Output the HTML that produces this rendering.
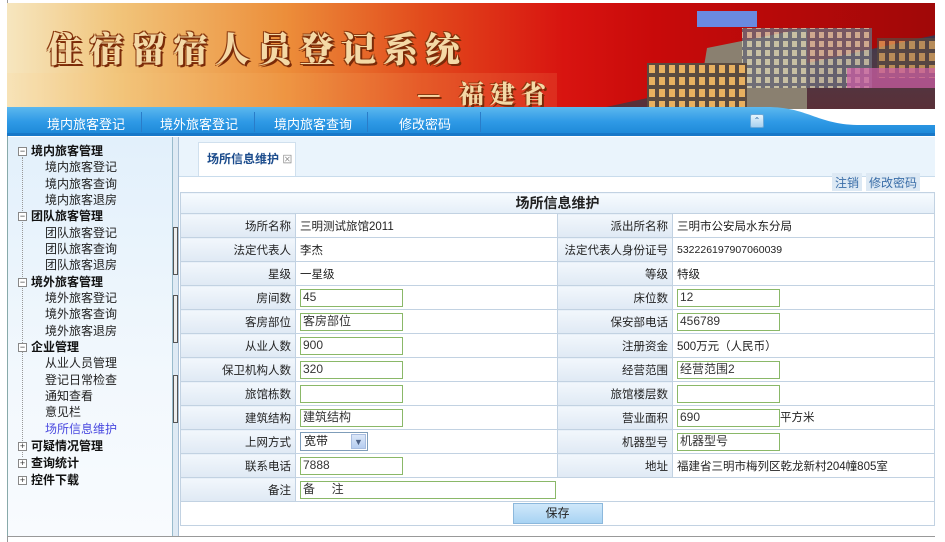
<!DOCTYPE html>
<html><head><meta charset="utf-8"><style>
*{margin:0;padding:0;box-sizing:border-box}
body{width:945px;height:542px;background:#fff;position:relative;overflow:hidden;font-family:"Liberation Sans","Noto Sans CJK SC","WenQuanYi Zen Hei",sans-serif;font-size:12px;color:#222}
.abs{position:absolute}
#banner{left:7px;top:3px;width:928px;height:106px;background:linear-gradient(90deg,#f6e6bf 0%,#f1c47a 12%,#ec8e3a 30%,#e24a1c 45%,#d81410 60%,#c80a0a 70%,#a00808 100%);overflow:hidden}
.title{left:40px;top:20px;font-family:"Noto Serif CJK SC",serif;font-weight:900;font-size:35px;letter-spacing:7px;color:#f4d9a6;text-shadow:2px 2px 0 #7a2a08,-1px -1px 0 #8a3a10,1px -1px 0 #8a3a10,-1px 1px 0 #8a3a10}
.sub{left:410px;top:72px;font-family:"Noto Serif CJK SC",serif;font-weight:900;font-size:25px;letter-spacing:6px;color:#f4d9a6;text-shadow:2px 2px 0 #7a2a08,-1px -1px 0 #8a3a10}
#nav{left:7px;top:106px;width:928px;height:30px}
.nv{top:114px;color:#fff;font-size:13px}
.sep{top:112px;width:1px;height:20px;background:#7fb8e8;border-right:1px solid #2a7cc8}
#side{left:7px;top:137px;width:166px;height:400px;background:linear-gradient(180deg,#e2f0fb,#f2f8fd 60%,#f8fbfe);border-left:1px solid #8aa;border-right:1px solid #9bc}
.t{position:absolute;font-size:12px;line-height:15px;white-space:nowrap}
.tb{font-weight:bold;color:#111}
.ts{color:#222}
.pm{position:absolute;left:10px;width:9px;height:9px;border:1px solid #888;background:#fff;font-size:9px;line-height:7px;text-align:center;color:#333}
#split{left:173px;top:137px;width:6px;height:400px;background:#dfeaf4;border-right:1px solid #a9c0d6}
.grip{position:absolute;left:0;width:5px;height:48px;border:1px solid #555;background:#eee}
#main{left:179px;top:137px;width:756px;height:400px;background:#fff}
#tabbar{left:179px;top:137px;width:756px;height:40px;background:#eaf4fc;border-bottom:1px solid #c9dcec}
#tab{left:198px;top:142px;width:98px;height:34px;background:#fff;border:1px solid #d0e0ee;border-bottom:none;color:#1c4c8c;font-weight:bold;padding:7px 0 0 8px;font-size:12px}
.lk{top:173px;height:18px;padding:1px 3px;color:#3a6ea8;background:#dde9f4;font-size:12px}
table{position:absolute;left:180px;top:192px;width:755px;border-collapse:collapse}
td{border:1px solid #c2d2e2;height:24px;padding:0 4px;font-size:11.5px;white-space:nowrap}
td.l{text-align:right;background:linear-gradient(180deg,#f2f7fc,#dfe9f4);width:115px}
td.v{background:#fff}
.hd{text-align:center;font-weight:bold;font-size:14px;background:linear-gradient(180deg,#f7fbfe,#e4eef8);height:21px}
.in{display:inline-block;width:103px;height:18px;border:1.5px solid #8ab868;vertical-align:middle;font-size:12px;line-height:15px;padding-left:2px;color:#333}
.sel{display:inline-block;width:68px;height:19px;border:1px solid #7f9db9;vertical-align:middle;font-size:12px;line-height:17px;padding-left:3px;position:relative;background:#fff}
.sel i{position:absolute;right:1px;top:1px;width:15px;height:15px;background:linear-gradient(#dbe7f8,#b6cdf0);border:1px solid #a8bde0;color:#4d6185;font-style:normal;font-size:9px;text-align:center;line-height:14px}
.btn{display:inline-block;width:90px;height:21px;background:linear-gradient(#cfe8fa,#a8d3f3);border:1px solid #8cb8dc;line-height:19px;text-align:center;font-size:12px}
</style></head><body>
<div class="abs" style="left:7px;top:0;width:1px;height:542px;background:#999"></div>
<div id="banner" class="abs">
<svg class="abs" style="left:0;top:0" width="928" height="106"><defs>
<linearGradient id="b" x1="0" x2="0" y1="0" y2="1"><stop offset="0" stop-color="#2a2a52"/><stop offset="0.5" stop-color="#4a3a48"/><stop offset="1" stop-color="#5a3038"/></linearGradient>
<pattern id="w" width="9" height="9" patternUnits="userSpaceOnUse"><rect width="9" height="9" fill="#6a6a78"/><rect x="2" y="2" width="5" height="6" fill="#d8d0b0"/></pattern>
<pattern id="w2" width="10" height="12" patternUnits="userSpaceOnUse"><rect width="10" height="12" fill="#5a4a40"/><rect x="2" y="2" width="6" height="8" fill="#e8b060"/></pattern>
</defs>
<polygon points="1075,0 928,0 928,106 590,106" fill="url(#b)"/>
<polygon points="700,45 800,25 800,106 690,106" fill="#8a8070"/>
<rect x="735" y="25" width="130" height="60" fill="url(#w)" opacity=".8"/>
<rect x="870" y="35" width="58" height="40" fill="url(#w2)" opacity=".7"/>
<rect x="640" y="60" width="100" height="46" fill="url(#w2)"/>
<rect x="690" y="8" width="60" height="16" fill="#6a8ae0"/>
<rect x="840" y="65" width="88" height="20" fill="#d060a8" opacity=".7"/>
<rect x="0" y="70" width="550" height="36" fill="#ffd080" opacity=".12"/>
</svg>
<div class="abs title">住宿留宿人员登记系统</div>
<div class="abs sub">— 福建省</div>
</div>
<svg id="nav" class="abs" width="928" height="30" viewBox="0 0 928 30"><defs><linearGradient id="n" x1="0" x2="0" y1="0" y2="1"><stop offset="0" stop-color="#5cb8ee"/><stop offset=".5" stop-color="#2f9ae6"/><stop offset="1" stop-color="#1a86d6"/></linearGradient></defs>
<rect x="0" y="20" width="928" height="10" fill="#c9dcee"/>
<path d="M0 1 H760 C800 1 810 18 850 19 H928 V30 H0 Z" fill="url(#n)"/>
<rect x="0" y="27" width="928" height="3" fill="#1878c8"/>
</svg>
<div class="abs nv" style="left:47px">境内旅客登记</div>
<div class="abs sep" style="left:141px"></div>
<div class="abs nv" style="left:160px">境外旅客登记</div>
<div class="abs sep" style="left:254px"></div>
<div class="abs nv" style="left:274px">境内旅客查询</div>
<div class="abs sep" style="left:367px"></div>
<div class="abs nv" style="left:399px">修改密码</div>
<div class="abs sep" style="left:480px"></div>
<div class="abs" style="left:750px;top:114px;width:14px;height:14px;background:linear-gradient(#e8f4fc,#a8d0f0);border:1px solid #6aa8d8;border-radius:2px;font-size:8px;line-height:12px;text-align:center;color:#2a6aa8">⌃</div>

<div id="side" class="abs">
<div class="abs" style="left:14px;top:20px;width:1px;height:300px;border-left:1px dotted #999"></div>
<div class="pm" style="top:10px">−</div><div class="t tb" style="top:7px;left:23px">境内旅客管理</div>
<div class="t ts" style="top:23px;left:37px">境内旅客登记</div>
<div class="t ts" style="top:40px;left:37px">境内旅客查询</div>
<div class="t ts" style="top:56px;left:37px">境内旅客退房</div>
<div class="pm" style="top:75px">−</div><div class="t tb" style="top:72px;left:23px">团队旅客管理</div>
<div class="t ts" style="top:89px;left:37px">团队旅客登记</div>
<div class="t ts" style="top:105px;left:37px">团队旅客查询</div>
<div class="t ts" style="top:121px;left:37px">团队旅客退房</div>
<div class="pm" style="top:141px">−</div><div class="t tb" style="top:138px;left:23px">境外旅客管理</div>
<div class="t ts" style="top:154px;left:37px">境外旅客登记</div>
<div class="t ts" style="top:170px;left:37px">境外旅客查询</div>
<div class="t ts" style="top:187px;left:37px">境外旅客退房</div>
<div class="pm" style="top:206px">−</div><div class="t tb" style="top:203px;left:23px">企业管理</div>
<div class="t ts" style="top:219px;left:37px">从业人员管理</div>
<div class="t ts" style="top:236px;left:37px">登记日常检查</div>
<div class="t ts" style="top:252px;left:37px">通知查看</div>
<div class="t ts" style="top:268px;left:37px">意见栏</div>
<div class="t ts" style="top:285px;left:37px;color:#4a4ae0">场所信息维护</div>
<div class="pm" style="top:305px">+</div><div class="t tb" style="top:302px;left:23px">可疑情况管理</div>
<div class="pm" style="top:322px">+</div><div class="t tb" style="top:319px;left:23px">查询统计</div>
<div class="pm" style="top:339px">+</div><div class="t tb" style="top:336px;left:23px">控件下载</div>
</div>
<div id="split" class="abs"><div class="grip" style="top:90px"></div><div class="grip" style="top:158px"></div><div class="grip" style="top:238px"></div></div>
<div id="main" class="abs"></div>
<div id="tabbar" class="abs"></div>
<div id="tab" class="abs">场所信息维护 <span style="font-weight:normal;color:#888;font-size:10px">⊠</span></div>
<div class="abs lk" style="left:832px">注销</div>
<div class="abs lk" style="left:866px">修改密码</div>
<table>
<tr><td colspan="4" class="hd">场所信息维护</td></tr>
<tr><td class="l">场所名称</td><td class="v" style="width:262px">三明测试旅馆2011</td><td class="l">派出所名称</td><td class="v">三明市公安局水东分局</td></tr>
<tr><td class="l">法定代表人</td><td class="v">李杰</td><td class="l">法定代表人身份证号</td><td class="v" style="font-size:10.5px">532226197907060039</td></tr>
<tr><td class="l">星级</td><td class="v">一星级</td><td class="l">等级</td><td class="v">特级</td></tr>
<tr><td class="l">房间数</td><td class="v"><span class="in">45</span></td><td class="l">床位数</td><td class="v"><span class="in">12</span></td></tr>
<tr><td class="l">客房部位</td><td class="v"><span class="in">客房部位</span></td><td class="l">保安部电话</td><td class="v"><span class="in">456789</span></td></tr>
<tr><td class="l">从业人数</td><td class="v"><span class="in">900</span></td><td class="l">注册资金</td><td class="v">500万元（人民币）</td></tr>
<tr><td class="l">保卫机构人数</td><td class="v"><span class="in">320</span></td><td class="l">经营范围</td><td class="v"><span class="in">经营范围2</span></td></tr>
<tr><td class="l">旅馆栋数</td><td class="v"><span class="in"></span></td><td class="l">旅馆楼层数</td><td class="v"><span class="in"></span></td></tr>
<tr><td class="l">建筑结构</td><td class="v"><span class="in">建筑结构</span></td><td class="l">营业面积</td><td class="v"><span class="in">690</span>平方米</td></tr>
<tr><td class="l">上网方式</td><td class="v"><span class="sel">宽带<i>▼</i></span></td><td class="l">机器型号</td><td class="v"><span class="in">机器型号</span></td></tr>
<tr><td class="l">联系电话</td><td class="v"><span class="in">7888</span></td><td class="l">地址</td><td class="v">福建省三明市梅列区乾龙新村204幢805室</td></tr>
<tr><td class="l">备注</td><td colspan="3" class="v"><span class="in" style="width:256px">备&nbsp;&nbsp;&nbsp;&nbsp;&nbsp;注</span></td></tr>
<tr><td colspan="4" class="v" style="text-align:center"><span class="btn">保存</span></td></tr>
</table>
<div class="abs" style="left:7px;top:536px;width:928px;height:1px;background:#999"></div>
</body></html>
